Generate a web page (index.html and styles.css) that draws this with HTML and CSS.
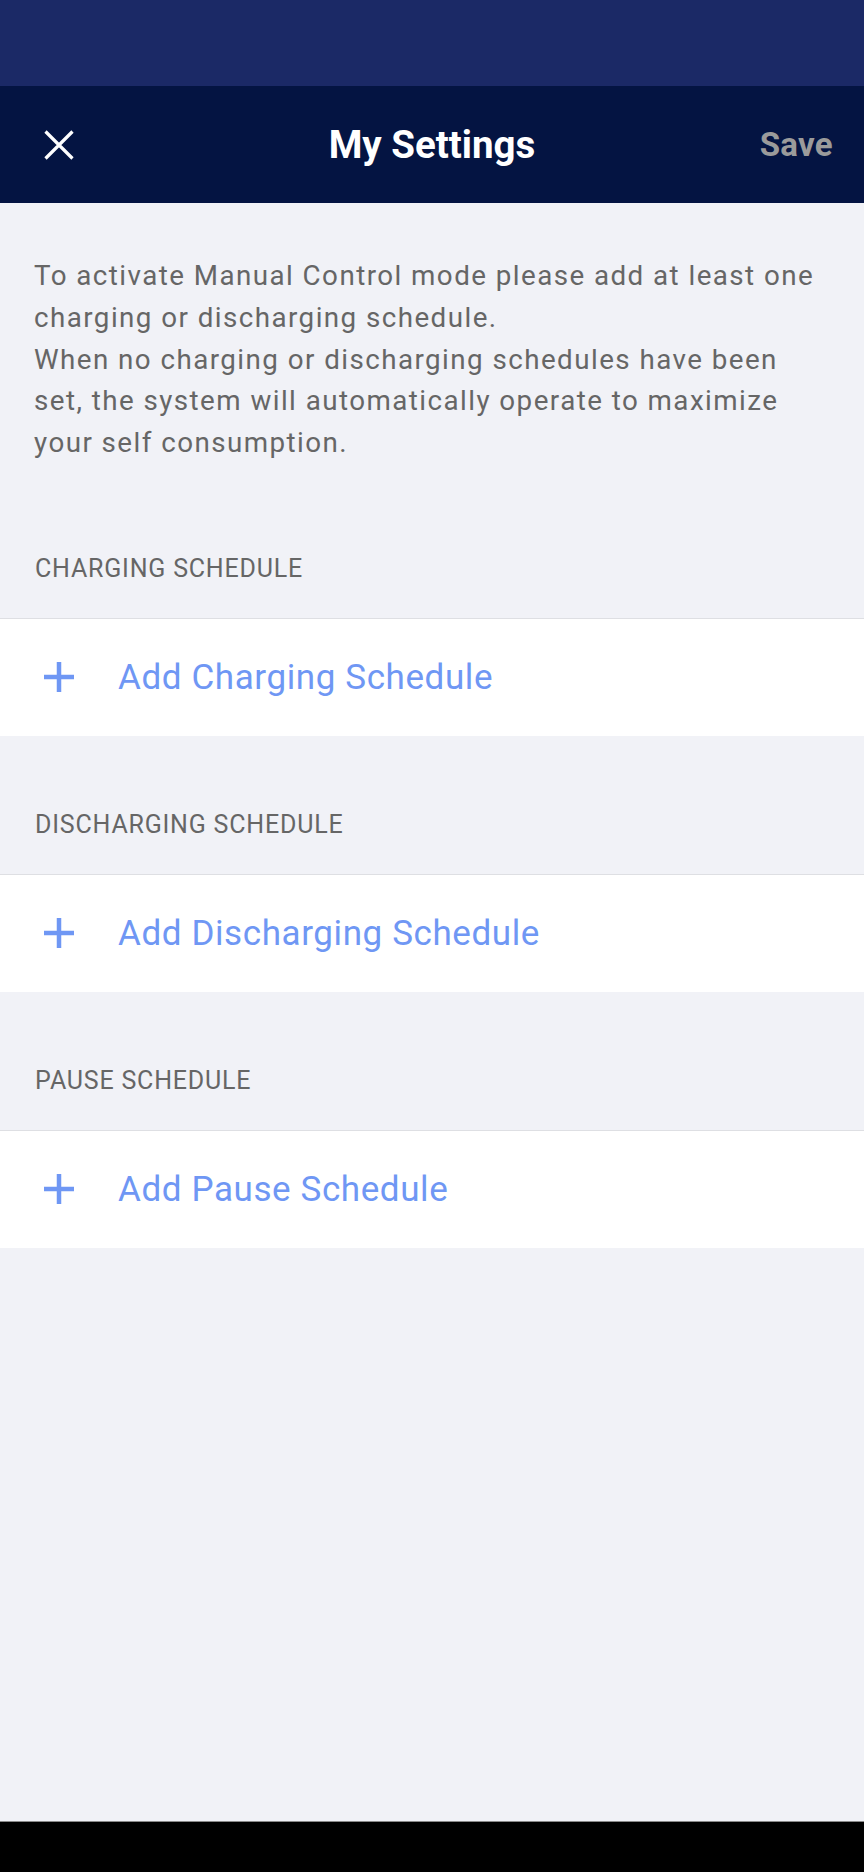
FILE: index.html
```html
<!DOCTYPE html>
<html lang="en">
<head>
<meta charset="utf-8">
<title>My Settings</title>
<link rel="stylesheet" href="styles.css">
</head>
<body>
<div class="screen">
  <div class="status-bar"></div>
  <header class="app-bar">
    <button class="close-btn" aria-label="Close">
      <svg width="30" height="30" viewBox="0 0 30 30"><path d="M1.5 1.5 L28.5 28.5 M28.5 1.5 L1.5 28.5" stroke="#fff" stroke-width="3.2" fill="none"/></svg>
    </button>
    <h1 class="title">My Settings</h1>
    <span class="save">Save</span>
  </header>
  <main class="content">
    <p class="intro">To activate Manual Control mode please add at least one charging or discharging schedule.<br>When no charging or discharging schedules have been set, the system will automatically operate to maximize your self consumption.</p>

    <section class="group">
      <h2 class="group-title">CHARGING SCHEDULE</h2>
      <div class="add-row">
        <svg class="plus" width="30" height="30" viewBox="0 0 30 30"><path d="M15 0 V30 M0 15 H30" stroke="#6f97f4" stroke-width="4.5" fill="none"/></svg>
        <span class="add-label">Add Charging Schedule</span>
      </div>
    </section>

    <section class="group">
      <h2 class="group-title">DISCHARGING SCHEDULE</h2>
      <div class="add-row">
        <svg class="plus" width="30" height="30" viewBox="0 0 30 30"><path d="M15 0 V30 M0 15 H30" stroke="#6f97f4" stroke-width="4.5" fill="none"/></svg>
        <span class="add-label">Add Discharging Schedule</span>
      </div>
    </section>

    <section class="group">
      <h2 class="group-title">PAUSE SCHEDULE</h2>
      <div class="add-row">
        <svg class="plus" width="30" height="30" viewBox="0 0 30 30"><path d="M15 0 V30 M0 15 H30" stroke="#6f97f4" stroke-width="4.5" fill="none"/></svg>
        <span class="add-label">Add Pause Schedule</span>
      </div>
    </section>
  </main>
  <div class="nav-bar"></div>
</div>
</body>
</html>
```

FILE: styles.css
```css
* { box-sizing: border-box; }
html, body { margin: 0; padding: 0; }
body {
  font-family: Roboto, "Noto Sans", sans-serif;
  background: #f1f2f7;
}
.screen {
  width: 864px;
  height: 1872px;
  display: flex;
  flex-direction: column;
  background: #f1f2f7;
}
.status-bar {
  height: 86px;
  background: #1b2966;
  flex: none;
}
.app-bar {
  height: 117px;
  flex: none;
  background: #041442;
  display: flex;
  align-items: center;
  justify-content: space-between;
  padding: 0 31px 0 44px;
  position: relative;
}
.close-btn {
  background: none;
  border: 0;
  padding: 0;
  width: 30px;
  height: 30px;
  display: flex;
}
.title {
  margin: 0;
  font-size: 38.5px;
  font-weight: 700;
  color: #fff;
  position: absolute;
  left: 0;
  right: 0;
  text-align: center;
  pointer-events: none;
}
.save {
  font-size: 33px;
  font-weight: 700;
  letter-spacing: 0.3px;
  color: #9b9b9b;
}
.content {
  flex: 1;
}
.intro {
  margin: 0;
  padding: 52px 30px 16px 34px;
  font-size: 27.75px;
  line-height: 41.75px;
  letter-spacing: 1.45px;
  color: #666;
}
.group-title {
  margin: 0;
  padding: 74px 35px 34px;
  font-size: 25px;
  line-height: 30px;
  font-weight: 400;
  letter-spacing: 0.8px;
  color: #666;
}
.add-row {
  height: 118px;
  background: #fff;
  border-top: 1px solid #dedfe3;
  display: flex;
  align-items: center;
  padding-left: 44px;
}
.plus { flex: none; }
.add-label {
  margin-left: 44px;
  font-size: 35px;
  letter-spacing: 0.6px;
  color: #6f97f4;
}
.nav-bar {
  height: 51px;
  flex: none;
  background: #000;
  border-top: 1px solid #8a8a8a;
}
```
